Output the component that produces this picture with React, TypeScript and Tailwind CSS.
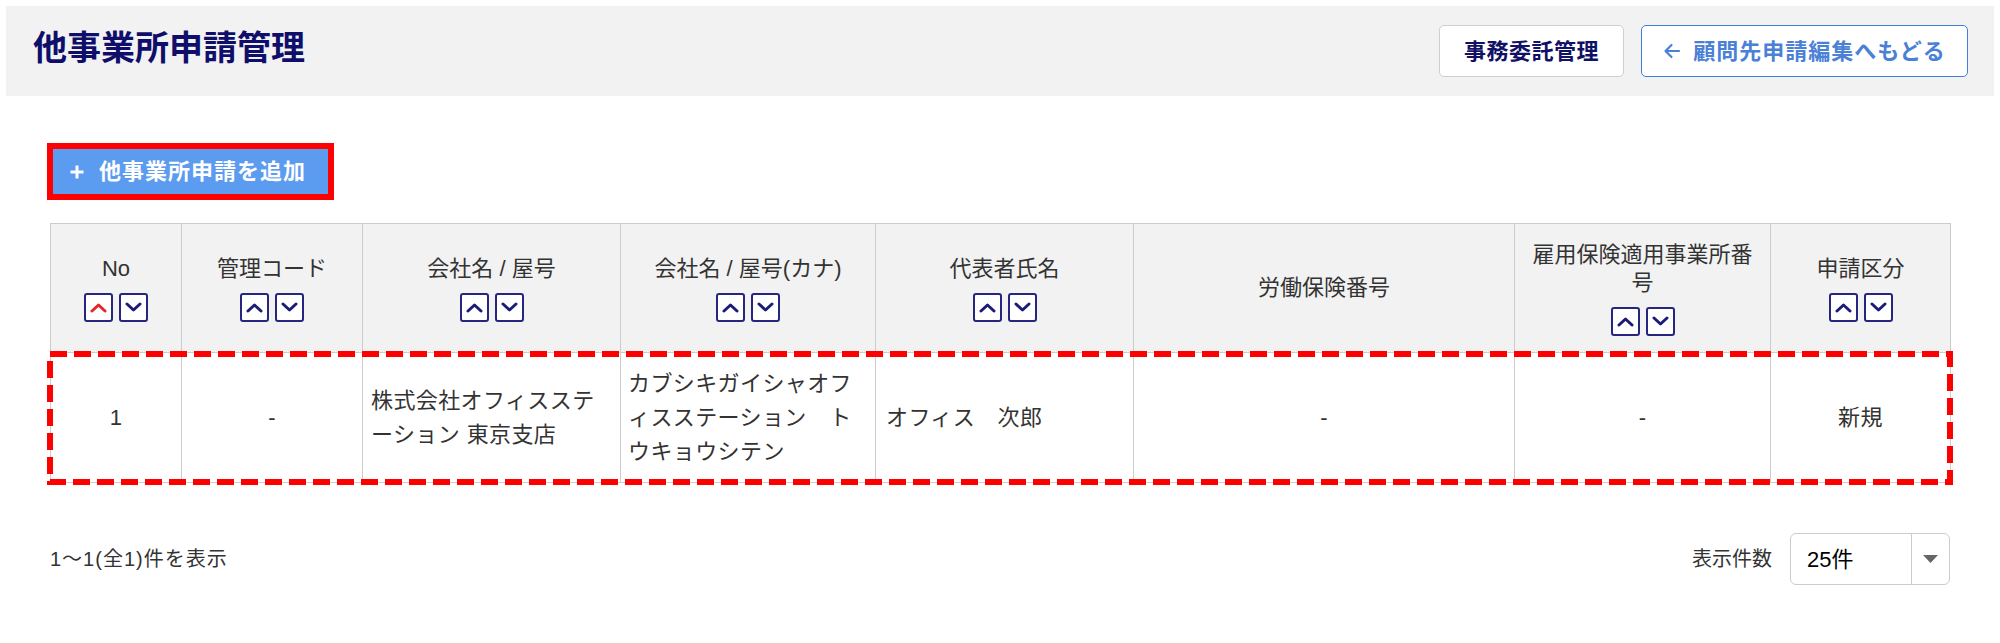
import React from "react";

type Col = { label: React.ReactNode; w: string; sort: boolean; active?: boolean };

const cols: Col[] = [
  { label: "No", w: "w-[131px]", sort: true, active: true },
  { label: "管理コード", w: "w-[181px]", sort: true },
  { label: "会社名 / 屋号", w: "w-[258px]", sort: true },
  { label: "会社名 / 屋号(カナ)", w: "w-[255px]", sort: true },
  { label: "代表者氏名", w: "w-[258px]", sort: true },
  { label: "労働保険番号", w: "w-[381px]", sort: false },
  {
    label: (
      <>
        雇用保険適用事業所番
        <br />号
      </>
    ),
    w: "w-[256px]",
    sort: true,
  },
  { label: "申請区分", w: "w-[180px]", sort: true },
];

function Chevron({ up, red }: { up: boolean; red?: boolean }) {
  return (
    <svg width="17" height="11" viewBox="0 0 17 11" fill="none">
      <polyline
        points={up ? "2,9 8.5,3 15,9" : "2,2 8.5,8 15,2"}
        stroke={red ? "#e3262b" : "#1c1c78"}
        strokeWidth="3"
        strokeLinecap="round"
        strokeLinejoin="round"
      />
    </svg>
  );
}

function SortButtons({ active }: { active?: boolean }) {
  return (
    <div className="flex gap-[6px]">
      <span className="flex h-[29px] w-[29px] items-center justify-center rounded-[3px] border-2 border-[#26267e] bg-white">
        <Chevron up red={active} />
      </span>
      <span className="flex h-[29px] w-[29px] items-center justify-center rounded-[3px] border-2 border-[#26267e] bg-white">
        <Chevron up={false} />
      </span>
    </div>
  );
}

export default function App() {
  return (
    <div className="min-h-[643px] bg-white pt-[6px] font-['Liberation_Sans','Noto_Sans_CJK_JP',sans-serif] text-[#333]">
      {/* header */}
      <div className="mx-[6px] flex h-[90px] items-center justify-between bg-[#f2f2f2] pl-[27px] pr-[26px]">
        <h1 className="-mt-[6px] text-[34px] font-bold leading-none text-[#0f0f6b]">他事業所申請管理</h1>
        <div className="flex gap-[17px]">
          <button className="flex h-[52px] w-[185px] items-center justify-center rounded-[5px] border border-[#cfcfcf] bg-white text-[22px] font-bold tracking-[0.5px] text-[#111166]">
            事務委託管理
          </button>
          <button className="flex h-[52px] w-[327px] items-center justify-center gap-[12px] rounded-[5px] border border-[#3f7fdc] bg-white text-[22px] font-bold tracking-[1px] text-[#4a80d6]">
            <svg width="18" height="18" viewBox="0 0 18 18" fill="none">
              <path d="M16 9H2.5M8.5 3L2.5 9L8.5 15" stroke="#4a80d6" strokeWidth="2.2" strokeLinecap="round" strokeLinejoin="round" />
            </svg>
            <span>顧問先申請編集へもどる</span>
          </button>
        </div>
      </div>

      <div className="px-[50px]">
        {/* add button */}
        <div className="-ml-[3px] mt-[47px] inline-flex border-[6px] border-[#ff0000]">
          <button className="flex h-[45px] w-[275px] items-center gap-[14px] bg-[#5b9bf0] pl-[16px] text-[22px] font-bold tracking-[1px] text-white">
            <svg width="16" height="16" viewBox="0 0 16 16" fill="none">
              <path d="M8 1.5V14.5M1.5 8H14.5" stroke="white" strokeWidth="3" />
            </svg>
            <span>他事業所申請を追加</span>
          </button>
        </div>

        {/* table */}
        <div className="relative mt-[23px]">
          <table className="w-full table-fixed border-collapse">
            <colgroup>
              {cols.map((c, i) => (
                <col key={i} className={c.w} />
              ))}
            </colgroup>
            <thead>
              <tr className="h-[129px] bg-[#f2f2f2]">
                {cols.map((c, i) => (
                  <th key={i} className="border border-[#cccccc] px-[6px] align-middle text-[22px] font-normal leading-[28px] text-[#333]">
                    <div className="flex flex-col items-center gap-[10px]">
                      <div>{c.label}</div>
                      {c.sort && <SortButtons active={c.active} />}
                    </div>
                  </th>
                ))}
              </tr>
            </thead>
            <tbody>
              <tr className="h-[130px] text-[22px] leading-[34px] tracking-[0.4px] text-[#333]">
                <td className="border border-[#cccccc] text-center">1</td>
                <td className="border border-[#cccccc] text-center">-</td>
                <td className="whitespace-nowrap border border-[#cccccc] px-[8px]">
                  株式会社オフィスステ
                  <br />
                  ーション 東京支店
                </td>
                <td className="whitespace-nowrap border border-[#cccccc] px-[7px]">
                  カブシキガイシャオフ
                  <br />
                  ィスステーション　ト
                  <br />
                  ウキョウシテン
                </td>
                <td className="whitespace-nowrap border border-[#cccccc] px-[10px]">オフィス　次郎</td>
                <td className="border border-[#cccccc] text-center">-</td>
                <td className="border border-[#cccccc] text-center">-</td>
                <td className="border border-[#cccccc] text-center">新規</td>
              </tr>
            </tbody>
          </table>
          {/* annotation: dashed red outline over the data row */}
          <svg
            className="pointer-events-none absolute -left-[3px] top-[128px]"
            width="1906"
            height="134"
            viewBox="0 0 1906 134"
            fill="none"
          >
            <rect x="3" y="3" width="1900" height="128" stroke="#ff0000" strokeWidth="6" strokeDasharray="17 7" />
          </svg>
        </div>

        {/* footer */}
        <div className="mt-[50px] flex items-center justify-between">
          <span className="text-[20px] tracking-[1px] text-[#333]">1〜1(全1)件を表示</span>
          <div className="flex items-center gap-[18px]">
            <span className="text-[20px] text-[#333]">表示件数</span>
            <div className="flex h-[52px] w-[160px] items-stretch rounded-[6px] border border-[#cccccc] bg-white">
              <span className="flex flex-1 items-center pl-[16px] text-[22px] text-black">25件</span>
              <span className="flex w-[38px] items-center justify-center border-l border-[#cccccc]">
                <svg width="15" height="8" viewBox="0 0 15 8">
                  <polygon points="0,0 15,0 7.5,8" fill="#666" />
                </svg>
              </span>
            </div>
          </div>
        </div>
      </div>
    </div>
  );
}
